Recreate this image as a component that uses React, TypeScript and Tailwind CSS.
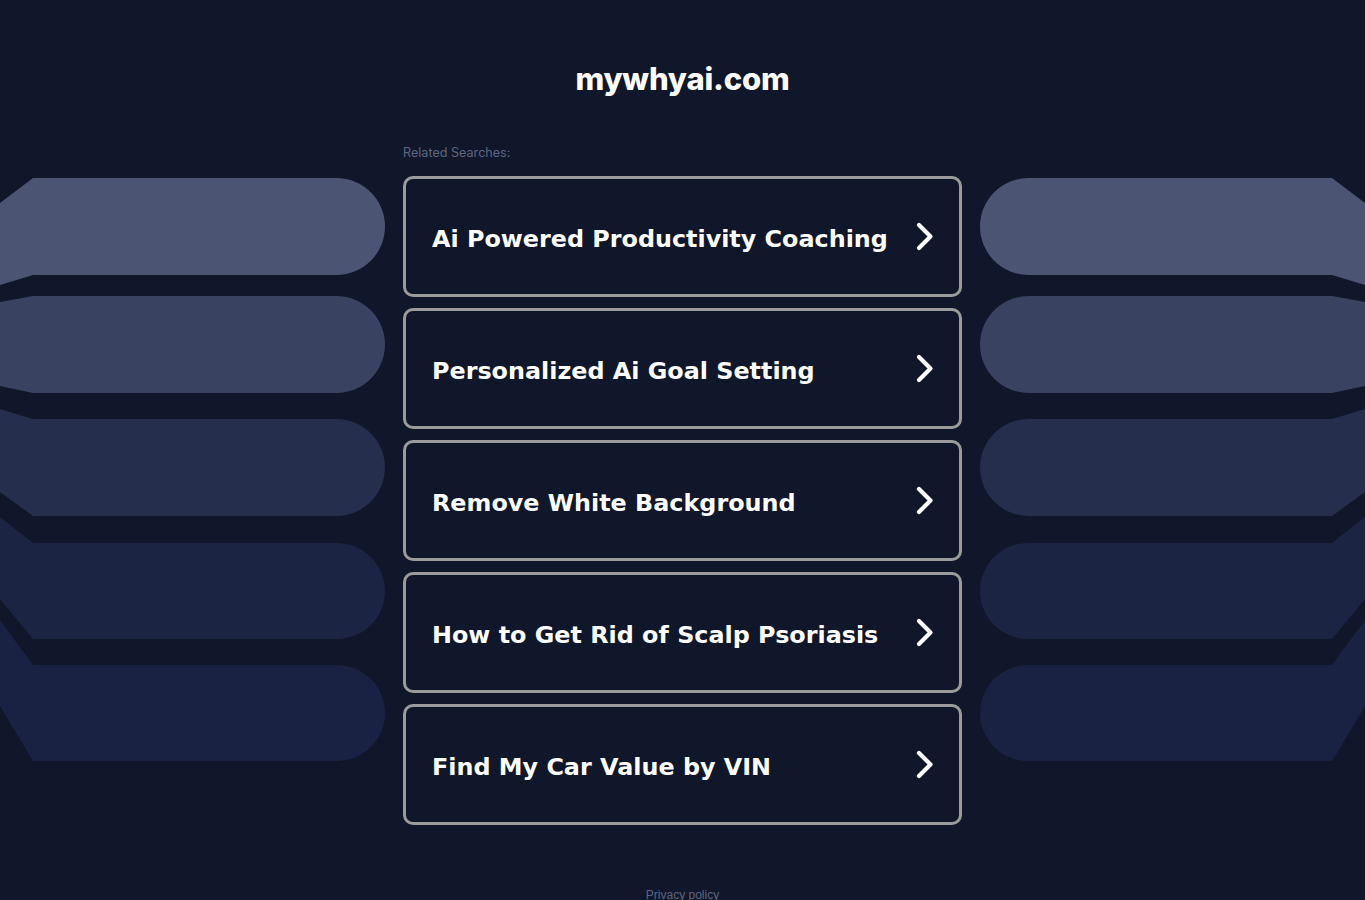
import React from 'react';

// Fan of rounded bands framing the list, drawn for the left side and mirrored for the right
const bands = [
  { t: 178, b: 275, lt: 203, lb: 285, fill: '#4b5573' },
  { t: 296, b: 393, lt: 302, lb: 386, fill: '#394261' },
  { t: 419, b: 516, lt: 409, lb: 492, fill: '#252e4d' },
  { t: 543, b: 639, lt: 517, lb: 599, fill: '#1c2444' },
  { t: 665, b: 761, lt: 620, lb: 706, fill: '#1a2243' },
];

const Bands = ({ className }: { className: string }) => (
  <svg className={className} width="386" height="900" viewBox="0 0 386 900">
    {bands.map((s, i) => {
      const r = (s.b - s.t) / 2;
      const x = 385 - r;
      return (
        <path
          key={i}
          fill={s.fill}
          d={`M0 ${s.lt} L33 ${s.t} L${x} ${s.t} A${r} ${r} 0 0 1 ${x} ${s.b} L33 ${s.b} L0 ${s.lb} Z`}
        />
      );
    })}
  </svg>
);

const Chevron = () => (
  <svg width="20" height="31" viewBox="0 0 20 31" fill="none" className="shrink-0">
    <polyline
      points="4,4 15.5,15.5 4,27"
      stroke="white"
      strokeWidth="4.2"
      strokeLinecap="round"
      strokeLinejoin="round"
    />
  </svg>
);

const searches = [
  'Ai Powered Productivity Coaching',
  'Personalized Ai Goal Setting',
  'Remove White Background',
  'How to Get Rid of Scalp Psoriasis',
  'Find My Car Value by VIN',
];

export default function App() {
  return (
    <div className="relative min-h-screen h-[900px] overflow-hidden bg-[#10172a]">
      <Bands className="absolute left-0 top-0" />
      <Bands className="absolute right-0 top-0 -scale-x-100" />

      <div className="relative mx-auto flex w-[559px] flex-col">
        <h1 className="pt-[61px] text-center text-[31px] leading-[36px] font-extrabold tracking-[-0.2px] text-white [font-family:Inter,sans-serif]">
          mywhyai.com
        </h1>

        <p className="mt-[49px] text-[12.6px] leading-[14px] text-[#5d6582] [font-family:Inter,sans-serif]">
          Related Searches:
        </p>

        <div className="mt-[16px] flex flex-col gap-[11px]">
          {searches.map((item) => (
            <a
              key={item}
              href="#"
              className="flex h-[121px] items-center justify-between rounded-[10px] border-[3px] border-[#9b9b9b] pl-[26px] pr-[24px]"
            >
              <span className="pt-[6px] text-[23.85px] font-bold text-white [font-family:'DejaVu_Sans',sans-serif]">
                {item}
              </span>
              <Chevron />
            </a>
          ))}
        </div>

        <p className="mt-[63px] text-center text-[12px] leading-[14px] text-[#5d6582] [font-family:'Liberation_Sans',sans-serif]">
          Privacy policy
        </p>
      </div>
    </div>
  );
}
